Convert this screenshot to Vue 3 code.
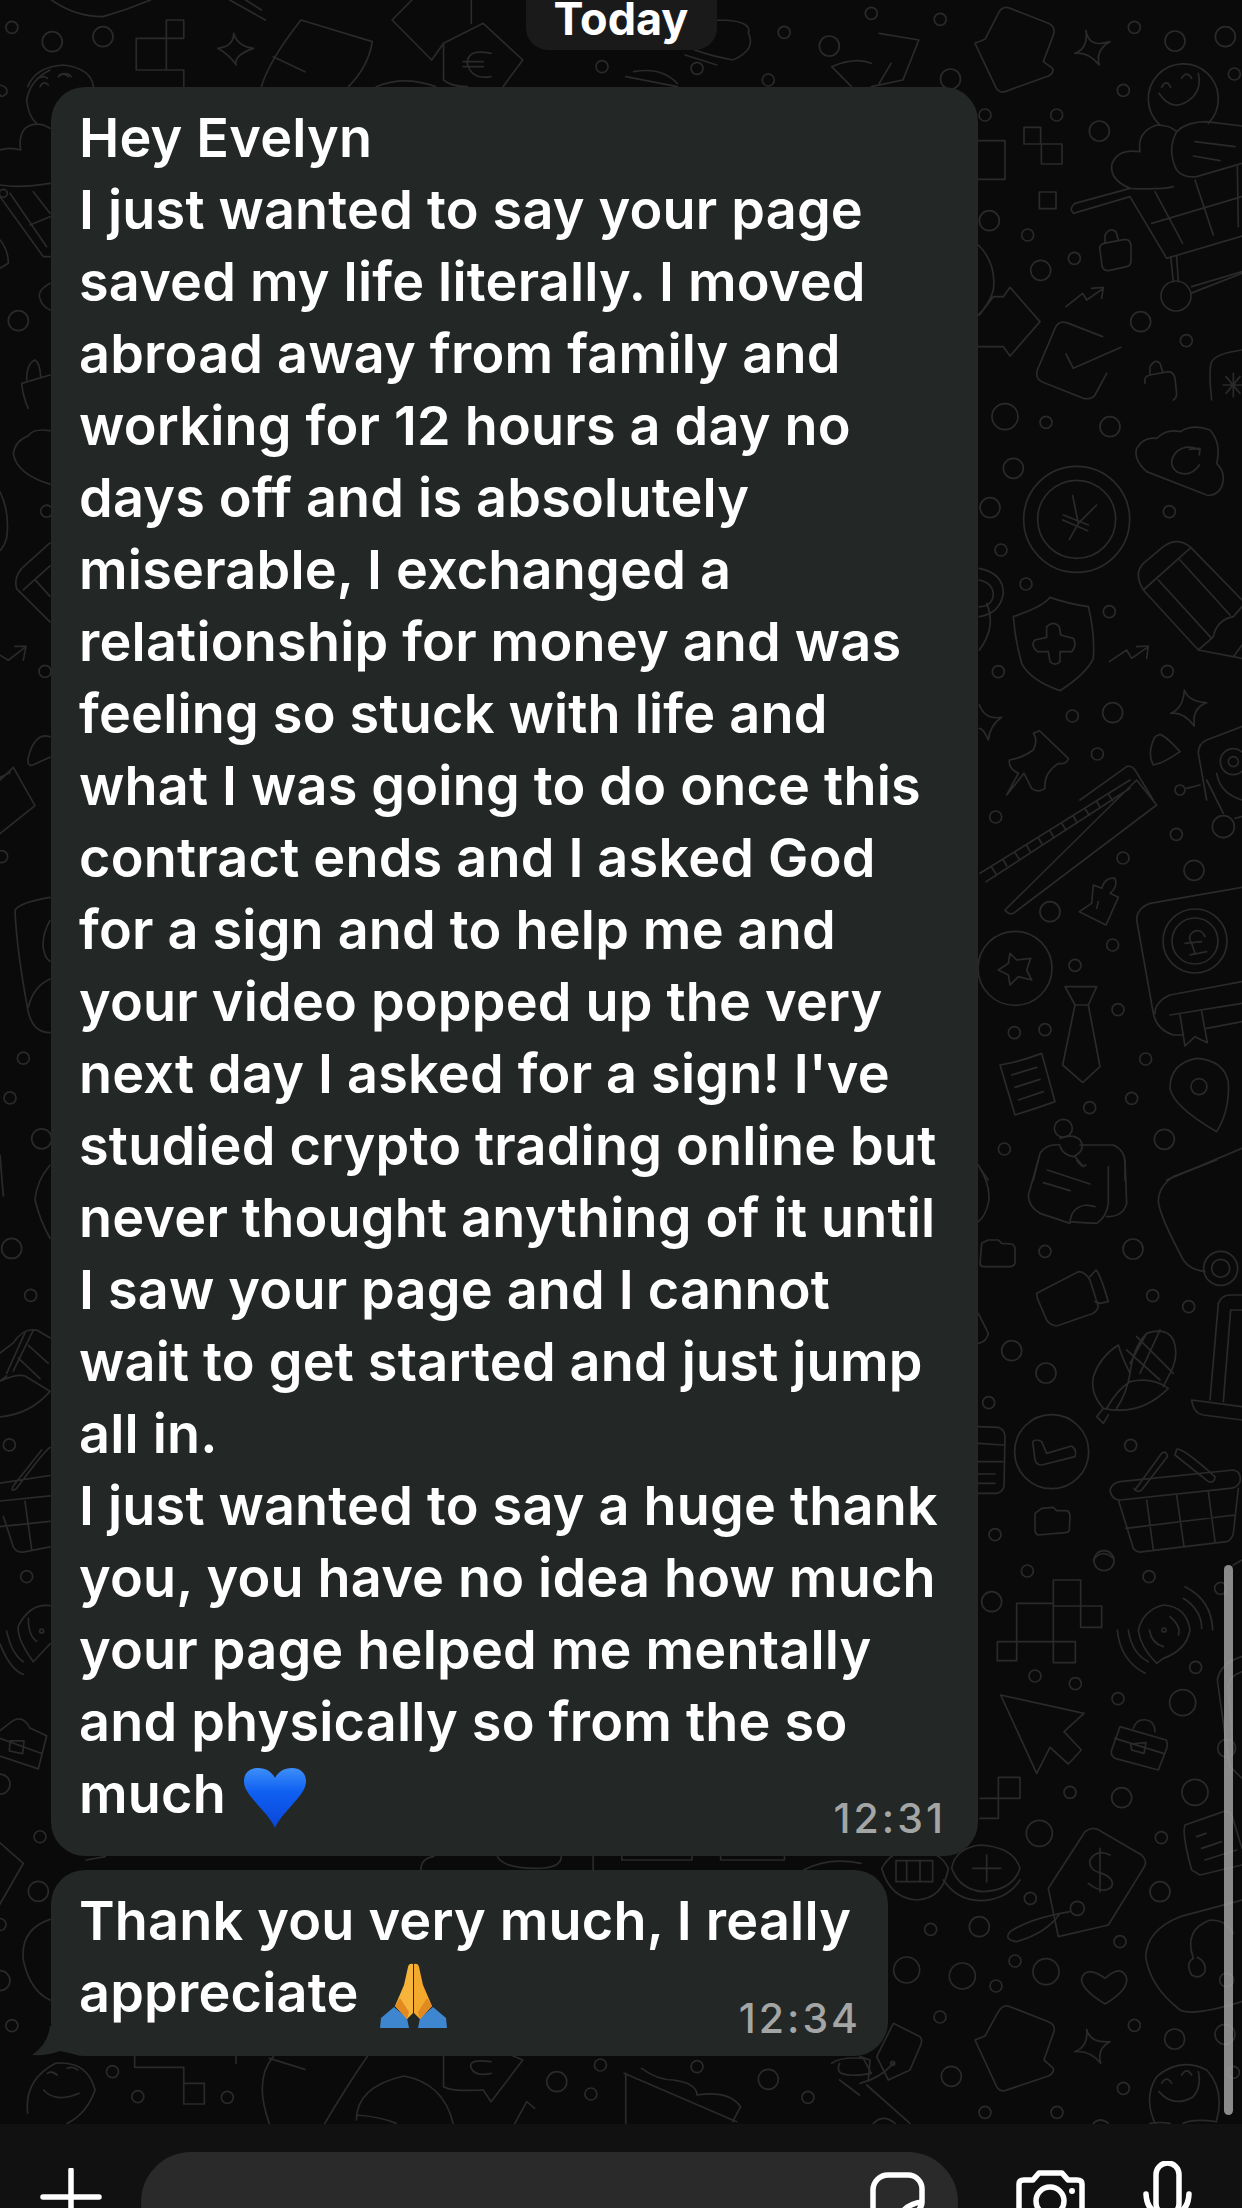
<script setup>
const messages = [
  {
    time: '12:31',
    emoji: 'heart',
    lines: [
      'Hey Evelyn',
      'I just wanted to say your page',
      'saved my life literally. I moved',
      'abroad away from family and',
      'working for 12 hours a day no',
      'days off and is absolutely',
      'miserable, I exchanged a',
      'relationship for money and was',
      'feeling so stuck with life and',
      'what I was going to do once this',
      'contract ends and I asked God',
      'for a sign and to help me and',
      'your video popped up the very',
      "next day I asked for a sign! I've",
      'studied crypto trading online but',
      'never thought anything of it until',
      'I saw your page and I cannot',
      'wait to get started and just jump',
      'all in.',
      'I just wanted to say a huge thank',
      'you, you have no idea how much',
      'your page helped me mentally',
      'and physically so from the so',
      'much'
    ]
  },
  {
    time: '12:34',
    emoji: 'pray',
    lines: ['Thank you very much, I really', 'appreciate']
  }
]

// wallpaper doodles, each group drawn in the scale it was measured at
const doodles = [
  {
    x: 960, y: 0, sx: 1 / 3, sy: 1 / 3,
    paths: [
      'M45 130 L75 118 L115 40 Q128 15 150 25 L265 70 Q288 80 280 105 L250 185 L278 205 Q282 220 265 228 L135 275 Q118 280 108 263 Z',
      'M378 92 Q385 145 450 125 Q405 150 418 195 Q385 155 345 160 Q385 145 378 92Z',
      'M192 382h50v50h-50z M244 432h62v60h-62z M238 576h50v50h-50z M55 422h80v116h-80',
      'M600 375 A105 105 0 1 1 745 370 M597 280 Q640 345 700 290 Q725 260 715 220 M605 262 Q620 235 632 262 M665 235 Q680 210 695 235',
      'M640 560 Q600 570 510 565 Q450 540 455 495 Q470 445 540 455 Q530 395 590 375 Q630 375 650 395',
      'M650 395 Q680 365 740 365 L846 378 M650 395 Q620 450 650 510 Q670 535 710 530 L846 490 M705 425 L825 440 M700 468 L780 482',
      'M340 640 Q325 625 345 610 L510 565 M340 640 L510 590 L620 775 L846 708 M575 670 L846 590 M585 575 L668 730 M705 540 L760 705 M832 500 L835 680',
      'M632 770 L640 845 M650 770 L655 845 M692 880 L846 820 M695 860 L846 815',
      'M420 750 Q416 735 432 730 L495 718 Q510 718 513 735 L513 780 Q515 795 500 800 L445 812 Q430 812 426 798 Z M435 725 V705 Q450 680 468 695 L475 720',
      'M318 920 L368 880 L380 900 L430 865 M395 865 L430 862 L425 895',
      'M58 945 L100 890 L130 890 L150 862 L240 965 L150 1068 L130 1040 L55 1040 M55 735 Q110 790 100 870 Q90 910 55 945',
      'M428 1010 L320 968 Q295 960 285 985 L232 1110 Q225 1135 245 1145 L370 1195 Q395 1200 405 1185 L440 1120 M318 1062 L340 1105 L483 1042',
      'M555 1150 Q550 1130 570 1125 L625 1115 Q640 1115 645 1135 L650 1180 Q650 1195 640 1200 M570 1125 V1100 Q585 1075 600 1090 L608 1115',
      'M846 1050 Q770 1060 755 1085 Q745 1110 755 1200 M820 1120 V1190 M790 1155 H846 M798 1130 L840 1180 M840 1130 L798 1180'
    ],
    rings: [[523, 82, 6], [645, 123, 10], [796, 110, 10], [823, 222, 6], [490, 271, 6], [75, 345, 6], [290, 345, 6], [418, 393, 10], [88, 662, 10], [203, 705, 6], [242, 811, 10], [343, 775, 6], [542, 965, 10], [679, 1022, 6], [648, 888, 15]]
  },
  {
    x: 950, y: 400, sx: 1 / 3, sy: 1 / 3,
    paths: [
      'M368 287 L385 370 L358 418 M440 315 L385 370 M340 345 L415 375 M338 360 L413 392',
      'M590 215 Q550 180 560 145 Q580 110 620 115 Q650 85 690 95 Q730 70 780 90 Q815 130 800 190 Q830 220 815 260 Q800 290 770 285 Z M750 150 Q710 130 680 155 Q650 190 680 215 Q720 235 748 195 M718 148 L750 145 L748 165',
      'M580 570 Q550 520 580 490 L640 440 Q680 410 720 440 L876 600 M580 570 L745 750 L876 775 M580 570 L720 445 M625 540 L785 715 M690 480 L840 645 M745 750 Q780 720 790 710 Q800 660 850 650 L876 620 M850 770 L876 735',
      'M190 650 Q280 620 300 592 Q350 610 415 620 Q435 700 430 775 Q410 820 330 872 Q240 840 215 790 Q195 720 190 650Z',
      'M290 680 Q310 660 328 680 L332 705 L370 715 Q382 735 365 755 L330 755 L330 785 Q315 800 300 785 L295 755 L262 755 Q240 735 255 720 L290 712Z',
      'M478 785 L530 750 L545 775 L595 740 M560 740 L595 738 L590 775',
      'M88 505 Q160 520 160 580 Q150 640 88 650 M88 540 Q130 550 130 585 Q125 620 88 620 M110 610 Q140 680 88 750',
      'M88 915 Q105 960 155 952 Q120 975 115 1020 Q100 985 88 985',
      'M703 870 Q715 905 770 908 Q725 925 733 978 Q700 935 662 940 Q700 925 703 870Z',
      'M268 992 L355 1075 Q350 1095 325 1090 Q280 1120 285 1165 Q265 1180 245 1165 L222 1120 L170 1185 L205 1120 Q175 1105 178 1080 Q215 1075 250 1050 Q265 1020 250 1000 Z',
      'M630 1003 Q650 1010 690 1055 Q640 1090 610 1095 Q590 1060 615 1010Z',
      'M876 980 L770 1020 Q745 1030 745 1060 L770 1200 M800 1120 Q810 1180 876 1200 M390 1200 L530 1100 Q545 1095 555 1110 L610 1200'
    ],
    rings: [[165, 50, 13], [288, 67, 6], [480, 80, 10], [190, 205, 10], [120, 323, 10], [153, 450, 6], [658, 335, 6], [228, 552, 6], [478, 635, 6], [145, 815, 6], [652, 814, 6], [367, 948, 6], [488, 938, 10], [442, 1062, 6], [380, 358, 53], [380, 358, 39], [850, 1085, 13], [850, 1085, 5]]
  },
  {
    x: 960, y: 780, sx: 1 / 3, sy: 1 / 3,
    paths: [
      'M60 280 L510 0 M530 0 L590 75 L160 400 Q145 405 135 390 Z M78 305 L510 25',
      'M95 262 L108 282 M130 240 L140 258 M165 218 L178 238 M200 196 L210 214 M235 174 L248 194 M270 152 L280 170 M305 130 L318 150 M340 108 L350 126 M375 86 L388 106 M410 64 L420 82 M445 42 L458 62',
      'M150 520 L170 540 L212 535 L200 570 L215 600 L175 590 L150 615 L145 585 L115 570 L145 550Z',
      'M400 315 L425 325 Q435 290 465 295 Q475 320 450 340 L475 352 L438 435 L358 395 L395 370Z M415 365 L410 385',
      'M315 620 L410 620 L385 675 L345 675Z M345 675 L308 855 L368 908 L420 860 L385 675',
      'M846 322 L570 370 Q530 385 530 420 L580 700 Q590 750 640 765 L665 765 M846 605 L630 645 Q585 665 585 700 M630 705 L846 670 M740 745 L846 725 M660 705 L675 798 L705 770 L742 788 L725 695',
      'M735 470 Q725 445 700 455 Q680 470 695 490 L705 520 L690 525 L740 515 M675 490 L725 485',
      'M120 855 Q180 845 245 820 L285 965 Q230 985 165 1005 Z M155 885 L230 862 M165 922 L240 898 M175 960 L250 935',
      'M770 1055 Q640 980 630 925 Q630 850 710 835 Q790 840 805 905 Q810 990 770 1055Z',
      'M220 1200 L240 1120 Q260 1090 300 1095 M360 1095 L460 1095 Q495 1110 495 1150 L495 1200 M300 1075 Q340 1060 360 1080 Q380 1110 340 1130 Q310 1125 300 1100 M345 1130 L370 1160',
      'M620 1200 L846 1105 M60 1165 L85 1200 M790 100 L740 0 M825 115 L846 110 M680 25 L720 15'
    ],
    rings: [[107, 111, 6], [489, 234, 6], [649, 163, 6], [702, 271, 10], [270, 395, 10], [458, 495, 6], [345, 556, 6], [474, 689, 6], [163, 758, 6], [255, 749, 6], [557, 837, 6], [515, 955, 6], [389, 983, 6], [613, 1078, 10], [133, 1107, 6], [790, 140, 11], [660, 30, 5], [165, 565, 37], [705, 483, 32], [705, 483, 23], [717, 920, 8], [310, 1045, 9]]
  },
  {
    x: 960, y: 1160, sx: 1 / 3, sy: 1 / 3,
    paths: [
      'M235 0 L205 105 Q205 140 240 160 L330 190 M262 30 L390 72 M250 68 L330 92 M330 185 Q335 140 380 135 L405 140 M330 185 Q390 190 410 190 Q440 170 445 130 L445 20 M495 0 L500 130 Q490 170 440 170 M350 0 Q365 25 378 15',
      'M65 250 L85 240 L115 240 L125 250 L155 252 Q165 255 165 270 L165 310 Q160 320 150 320 L70 320 Q60 320 60 310 Z',
      'M225 1060 L245 1045 L280 1042 L290 1052 L320 1052 Q330 1055 330 1070 L328 1110 Q325 1118 315 1118 L235 1125 Q225 1122 225 1110Z',
      'M770 0 L640 50 Q595 80 595 125 Q600 170 670 300 Q690 330 735 335',
      'M230 400 L355 335 Q375 335 390 360 L415 440 Q410 460 385 465 L290 498 Q270 495 260 480 L232 415 Z M390 350 L408 330 Q420 340 445 425 L420 430 L405 425',
      'M410 770 L430 745 Q390 700 400 650 Q420 590 475 555 Q485 590 510 640 Q500 700 470 745 M430 745 Q540 770 625 685 Q575 650 510 665 Q470 690 440 745 M510 640 Q520 560 560 520 Q620 500 640 540 Q660 590 625 650 L610 680 M500 570 L600 660 M530 530 L640 640 M560 520 L510 610 M600 510 L540 640 M410 770 L430 790 L445 765',
      'M750 720 L775 430 Q785 405 810 405 L846 405 M790 725 L812 450 L846 450 M695 720 L846 740 M695 720 Q700 760 730 765 L846 780',
      'M218 845 Q230 835 245 845 L260 880 L335 858 Q352 870 345 890 L245 915 Q230 915 225 900Z',
      'M450 990 Q455 970 480 965 L820 930 Q845 935 840 965 Q830 985 810 985 L480 1020 Q455 1020 450 990Z M475 1020 L520 1165 Q530 1180 550 1175 L800 1145 Q815 1140 820 1120 L835 985 M560 1020 L580 1170 M650 1005 L672 1160 M745 995 L765 1145 M498 1105 L825 1065',
      'M525 990 L605 880 Q620 870 622 890 L545 990 Q530 1000 522 985 M650 868 Q665 860 765 950 Q765 970 745 965 L645 885 Z',
      'M55 800 L115 802 Q135 810 135 830 L132 980 Q125 1000 105 1000 L55 1000 M55 850 L130 855 M55 905 L128 905 M55 942 L105 942 M55 970 L105 970',
      'M55 15 Q95 80 85 130 Q75 170 55 185 M55 460 L85 520 Q80 545 55 550 M400 1200 Q425 1165 460 1195'
    ],
    rings: [[255, 274, 6], [519, 267, 10], [782, 325, 17], [782, 325, 9], [578, 407, 6], [686, 440, 6], [155, 572, 10], [258, 639, 10], [86, 728, 6], [512, 856, 6], [105, 1124, 6], [275, 875, 37]]
  },
  {
    x: 880, y: 1540, sx: 1 / 3, sy: 1 / 3,
    paths: [
      'M520 120 H602 V198 H665 V262 H602 V198 H520 Z M410 190 H520 V305 H410 Z M352 305 H410 V362 H352 Z M520 305 H586 V368 H520 Z',
      'M830 370 Q780 320 775 270 Q790 210 850 195 Q920 200 930 270 Q920 330 850 355 Z M870 230 Q905 260 895 285 M808 270 Q815 310 850 320 M910 175 Q965 210 965 265 M915 140 Q995 180 998 270 M745 270 Q755 340 805 365 M712 270 Q720 360 795 400',
      'M362 465 L612 520 L552 575 L604 630 L565 672 L510 622 L470 700 Z',
      'M720 560 L858 600 Q865 610 860 625 L835 690 L705 655 Q690 645 695 630 Z M760 565 Q770 535 800 540 Q825 545 825 575 M705 595 L850 640 M752 612 L798 608 L792 640 L755 630 Z',
      'M355 712 H420 V775 H355 V712 M300 775 H355 V835 H300',
      'M505 1045 L615 875 Q640 855 665 875 L785 945 Q805 965 790 985 L685 1155 L535 1190 Z M690 945 Q650 925 630 960 Q625 990 665 1000 Q705 1015 695 1040 Q670 1065 625 1030 M660 925 V1055',
      'M915 855 L1030 815 Q1055 810 1060 840 L1086 925 M915 855 Q905 880 935 990 L960 1005 L1086 975 M950 890 L978 880 M965 925 L1025 905 M975 960 L1070 930',
      'M1086 350 Q1020 370 1012 420 L1040 620 L1050 680 L1086 715 M1086 395 Q1045 410 1045 440 L1060 640 M1086 60 L1060 75',
      'M5 985 Q40 925 100 930 Q180 930 205 985 Q190 1075 110 1080 Q30 1075 5 985Z M48 962 H158 V1025 H48Z M80 962 V1025 M120 962 V1025',
      'M215 985 Q225 925 300 915 Q400 920 420 985 Q400 1050 310 1055 Q240 1050 215 985Z M190 1020 Q230 1080 300 1082 Q380 1080 420 1020 M320 945 V1025 M278 985 H362'
    ],
    rings: [[442, 93, 6], [672, 62, 10], [807, 110, 6], [335, 185, 10], [1022, 145, 6], [465, 408, 6], [586, 431, 6], [947, 382, 6], [714, 476, 6], [908, 488, 13], [570, 757, 6], [725, 773, 10], [945, 757, 13], [478, 880, 13], [844, 893, 6], [840, 1055, 10], [451, 1075, 6], [152, 1168, 6], [298, 1160, 10], [852, 270, 2], [592, 1105, 7], [1040, 625, 9]]
  },
  {
    x: 860, y: 1900, sx: 1 / 3, sy: 1 / 3,
    paths: [
      'M630 35 Q510 55 450 95 Q430 120 470 125 Q560 100 600 40',
      'M735 312 Q660 265 665 235 Q680 195 735 235 Q785 190 800 235 Q805 270 735 312Z',
      'M1146 0 L960 50 Q860 90 857 170 Q870 260 960 330 Q1000 350 1146 305',
      'M1000 175 Q970 90 1050 60 Q1100 60 1120 100 M1000 175 Q975 190 995 225 Q1020 240 1035 215 Q1040 185 1012 172',
      'M345 420 L375 408 L415 335 Q430 312 450 320 L565 365 Q590 375 580 400 L552 480 L580 505 Q582 520 565 528 L435 572 Q420 575 410 560 Z',
      'M680 388 Q690 430 750 425 Q710 445 722 490 Q690 450 645 455 Q685 440 680 388Z',
      'M885 670 Q850 590 890 530 Q960 470 1040 510 Q1095 570 1070 660 M897 575 Q940 625 1000 590 Q1025 560 1015 515 M905 550 Q920 525 935 550 M965 525 Q980 500 995 525',
      'M100 370 L180 410 Q190 420 180 440 L150 510 L85 540 L50 470 Z M0 550 Q60 535 100 490',
      'M0 470 L30 480 L25 540 M20 555 L150 670 M40 670 Q70 640 105 670 M700 670 Q720 650 745 670 M870 670 Q900 665 930 670 M970 670 Q1000 655 1070 665'
    ],
    rings: [[780, 125, 6], [140, 210, 13], [307, 228, 13], [465, 183, 6], [408, 258, 6], [558, 215, 13], [240, 351, 6], [823, 376, 6], [944, 417, 10], [1095, 403, 10], [274, 529, 10], [790, 565, 6], [375, 637, 6], [591, 637, 6], [1120, 517, 6], [1100, 240, 7], [98, 490, 2]]
  },
  {
    x: 0, y: 0, sx: 1 / 1.2625, sy: 1 / 3,
    paths: [
      'M65 0 Q95 50 130 50 Q160 30 190 0 M290 0 L335 60 M310 0 L330 30',
      'M172 115 H232 V60 H210 V210 H172 Z M172 210 H232 V260',
      'M295 100 Q300 140 320 145 Q295 165 298 195 Q290 165 275 145 Q295 140 295 100',
      'M330 260 Q340 180 380 60 L470 125 Q465 200 440 260 M345 170 L385 215',
      'M35 260 Q45 200 80 195 Q115 205 118 260 M48 235 Q55 225 60 235 M75 225 Q85 215 90 230',
      'M560 130 L610 70 L660 180 L635 260 M560 130 L545 180 L495 60 L520 0 M595 0 V70 M560 130 L560 240 Q570 260 590 260 M620 160 Q590 145 590 190 Q595 240 620 230 M585 185 H610 M585 200 H610',
      'M475 260 Q510 225 550 260',
      'M905 60 Q950 60 945 100 Q955 150 925 180 Q880 160 860 130 Q885 85 905 60 M865 165 L905 195 M790 230 L855 260 M800 215 Q835 200 855 250',
      'M1110 100 L1160 120 L1140 240 L1100 260 M1050 200 Q1080 170 1100 190 M1050 200 L1075 260 M1125 190 L1110 250'
    ],
    rings: [[15, 82, 6], [66, 125, 10], [130, 110, 10], [1100, 40, 6], [1187, 58, 6], [1047, 138, 10], [990, 97, 6], [760, 200, 6], [880, 205, 6], [970, 240, 6], [1200, 237, 10]]
  },
  {
    x: 0, y: 1980, sx: 1 / 1.2625, sy: 1 / 3,
    paths: [
      'M35 400 Q30 300 70 250 Q110 240 120 330 Q110 400 85 430 M55 330 Q70 370 100 340 M60 280 Q65 270 72 285 M85 265 Q92 258 98 270',
      'M170 225 V262 H232 V310 H258 V372 H232 V310',
      'M345 230 Q320 300 340 430 M340 235 L385 268 M298 225 V250',
      'M465 225 Q440 310 410 430 M450 420 Q450 320 510 288 Q560 310 572 430 M450 405 Q480 410 500 430',
      'M560 225 V320 Q570 335 610 330 L620 365 L660 240 L645 225 M620 245 Q590 235 595 265 Q600 290 620 280',
      'M650 430 L665 365 L675 385',
      'M788 280 L930 425 M790 280 L790 430 M810 265 Q830 300 850 300 Q880 310 880 345 Q920 330 935 380 L925 425',
      'M1050 250 Q1060 230 1090 235 L1100 280 Q1050 300 1060 250 M1060 300 L1085 345'
    ],
    rings: [[15, 137, 6], [142, 275, 6], [174, 350, 6], [287, 352, 6], [703, 305, 10], [746, 342, 6], [758, 255, 6], [880, 260, 6], [970, 298, 10], [1020, 352, 6]]
  },
  {
    x: 0, y: 1740, sx: 1 / 1.568, sy: 1 / 3,
    paths: ['M135 360 L165 350 M660 390 Q660 355 680 350 M780 350 Q790 385 840 385 Q880 385 880 350 M930 350 V390 M975 350 V360 H1085 V350 M1130 350 V360 H1230 V350 M1260 390 Q1300 350 1350 370'],
    rings: []
  },
  {
    x: 0, y: 70, sx: 1 / 3, sy: 1 / 3,
    paths: [
      'M150 0 Q90 30 80 90 Q85 140 110 160 M120 50 Q130 30 145 45 M175 20 Q190 5 205 20',
      'M150 175 Q110 150 75 175 Q55 200 62 240 Q30 230 0 240 M0 345 Q60 355 150 340',
      'M0 380 L130 560 L150 560 M30 370 L140 530 M90 465 L150 440 M100 365 L150 430',
      'M0 510 Q25 540 25 580 L0 595 M150 640 Q115 660 118 680 Q125 710 150 720',
      'M65 940 L150 915 M65 940 Q70 985 85 1015 M80 930 Q80 880 105 870 Q120 880 122 920 M0 45 Q25 50 20 70 Q5 85 0 75'
    ],
    rings: [[10, 370, 4], [55, 752, 10]]
  },
  {
    x: 0, y: 400, sx: 1 / 3, sy: 1 / 1.96,
    paths: [
      'M150 60 Q100 55 85 70 Q45 80 40 105 Q50 145 150 165 M0 180 Q30 220 20 270 Q10 290 0 295',
      'M150 280 L65 330 Q40 350 50 370 L150 435 M70 372 L150 325 M105 352 L150 385',
      'M0 500 L25 510 L75 485 M45 483 L78 483 L70 510 M150 660 Q105 650 85 700 Q80 720 100 715 L150 700',
      'M0 745 L40 720 L105 795 L0 850 M0 740 L30 730',
      'M150 975 Q60 985 45 1000 Q50 1080 85 1200 Q100 1240 150 1240 M150 1020 Q125 1050 130 1075 Q135 1095 150 1100 M150 1135 Q100 1150 85 1190',
      'M0 1480 L10 1560 M150 1500 Q110 1530 105 1568'
    ],
    rings: [[140, 218, 6], [135, 532, 6], [5, 895, 6], [70, 1290, 6], [30, 1368, 6], [125, 1448, 10]]
  },
  {
    x: 0, y: 1200, sx: 1 / 3, sy: 1 / 1.96,
    paths: [
      'M105 0 Q120 40 150 75',
      'M0 300 L40 280 Q70 250 110 255 L150 270 M0 355 Q50 340 75 345 L150 375 Q90 420 0 425 M0 355 L20 345 M20 340 L75 260 M55 310 L120 350 M85 285 L145 320 M100 255 L40 335',
      'M150 485 Q135 490 50 565 Q30 575 40 560 L125 490 M0 555 L150 540 M0 590 L150 580 M0 640 L150 630 M75 590 L95 685 M10 620 L40 680 Q50 692 70 690 L150 680',
      'M150 795 Q90 790 55 835 Q50 860 100 905 L150 870 M85 820 Q85 855 110 865 M20 845 Q35 890 70 905 M0 870 Q30 920 70 930',
      'M0 1040 L40 1020 Q70 1010 90 1035 L140 1050 L115 1115 L0 1090 M0 1055 L125 1085 M30 1060 L72 1060 L68 1085 L28 1080Z',
      'M0 1260 L70 1300 L0 1380 M150 1410 Q60 1430 70 1490 Q90 1550 150 1568'
    ],
    rings: [[35, 95, 10], [92, 187, 6], [28, 480, 6], [80, 738, 6], [120, 1248, 6], [115, 1355, 10], [0, 1145, 10], [0, 1420, 6], [0, 1530, 10], [125, 845, 2]]
  }
]

const rings = doodles.flatMap((d) =>
  d.rings.map(([cx, cy, r]) => ({ cx: d.x + cx * d.sx, cy: d.y + cy * d.sy, r }))
)
</script>

<template>
  <div class="screen">
    <svg class="wallpaper" width="1242" height="2124" viewBox="0 0 1242 2124" fill="none">
      <g v-for="(d, i) in doodles" :key="i" :transform="`translate(${d.x} ${d.y}) scale(${d.sx} ${d.sy})`">
        <path v-for="(p, j) in d.paths" :key="j" :d="p" />
      </g>
      <circle v-for="(c, i) in rings" :key="'r' + i" :cx="c.cx" :cy="c.cy" :r="c.r" />
    </svg>

    <main class="chat">
      <div class="day">Today</div>

      <div v-for="(m, i) in messages" :key="i" class="bubble" :class="m.emoji">
        <div v-for="(line, n) in m.lines" :key="n" class="line">
          {{ line }}
          <template v-if="n === m.lines.length - 1">
            <svg v-if="m.emoji === 'heart'" class="emoji" width="62" height="60" viewBox="0 0 62 60">
              <defs>
                <linearGradient id="heartFill" x1="0" y1="0" x2="0" y2="1">
                  <stop offset="0" stop-color="#3d8ff9" />
                  <stop offset="0.4" stop-color="#0f60f2" />
                  <stop offset="1" stop-color="#0a46d8" />
                </linearGradient>
              </defs>
              <path d="M31 60 C27 50 17 41 8 30 C2 23 0 18 0 13 C0 5 6 0 14 0 C22 0 28 4 31 10 C34 4 40 0 48 0 C56 0 62 5 62 13 C62 18 60 23 54 30 C45 41 35 50 31 60Z" fill="url(#heartFill)" />
            </svg>
            <svg v-else class="emoji pray-icon" width="67" height="65" viewBox="0 0 67 65">
              <path d="M0 65 L1 55 L14 44 L27 55 L29 65Z" fill="#3e86d0" />
              <path d="M67 65 L66 55 L53 44 L40 55 L38 65Z" fill="#3e86d0" />
              <path d="M33 1 Q29 0 28 4 L24 22 L15 43 L27 56 L33 50Z" fill="#f6b53a" />
              <path d="M34 1 Q38 0 39 4 L43 22 L52 43 L40 56 L34 50Z" fill="#f2a92c" />
              <path d="M15 43 L27 56 L29 49 L20 35Z" fill="#e28a22" />
              <path d="M52 43 L40 56 L38 49 L47 35Z" fill="#e28a22" />
            </svg>
          </template>
        </div>
        <span class="time">{{ m.time }}</span>
        <svg v-if="i === messages.length - 1" class="tail" width="50" height="30" viewBox="0 0 50 30">
          <path d="M18 0 Q16 18 0 29 Q16 30 28 25 L50 30 L50 0Z" />
        </svg>
      </div>
    </main>

    <div class="scrollbar"></div>

    <footer class="composer">
      <svg class="plus" width="62" height="40" viewBox="0 0 62 40" fill="none">
        <path d="M31 2 V40 M3 29 H59" />
      </svg>
      <div class="input">
        <svg class="sticker" width="55" height="40" viewBox="0 0 55 40" fill="none">
          <path d="M3 40 V18 A15 15 0 0 1 18 3 H38 A14 14 0 0 1 52 17 V30 Q40 31 32 40 M52 30 Q52 36 46 40" />
        </svg>
      </div>
      <svg class="camera" width="69" height="40" viewBox="0 0 69 40" fill="none">
        <path d="M3 40 V14 Q3 10 8 10 H17 L23 3 H46 L52 10 H61 Q66 10 66 14 V40" />
        <circle cx="34" cy="31" r="14" />
        <circle class="dot" cx="56" cy="21" r="3" />
      </svg>
      <svg class="mic" width="49" height="48" viewBox="0 0 49 48" fill="none">
        <rect x="13" y="2" width="23" height="52" rx="11.5" />
        <path d="M3 33 Q4 54 24.5 54 Q45 54 46 33" />
      </svg>
    </footer>
  </div>
</template>

<style scoped>
.screen {
  position: relative;
  width: 1242px;
  height: 2208px;
  display: flex;
  flex-direction: column;
  overflow: hidden;
  background: #0a0a0a;
  color: #fff;
  font-family: Inter, "Liberation Sans", sans-serif;
}

.wallpaper {
  position: absolute;
  top: 0;
  left: 0;
}

.wallpaper path,
.wallpaper circle {
  stroke: #2a2a2a;
  stroke-width: 1.7;
  vector-effect: non-scaling-stroke;
  stroke-linecap: round;
  stroke-linejoin: round;
}

.chat {
  position: relative;
  flex: 1;
  display: flex;
  flex-direction: column;
  align-items: flex-start;
  gap: 14px;
  padding-left: 51px;
}

.day {
  align-self: center;
  margin: 0 0 23px -51px;
  width: 191px;
  height: 50px;
  border-radius: 0 0 22px 22px;
  background: #1a1a1a;
  text-align: center;
  font-size: 45px;
  font-weight: 700;
  line-height: 38px;
}

.bubble {
  position: relative;
  box-sizing: border-box;
  padding: 15px 28px 26px;
  border-radius: 34px;
  background: #232726;
  font-size: 54px;
  font-weight: 560;
  line-height: 72px;
  letter-spacing: 0.2px;
  white-space: nowrap;
}

.bubble.heart {
  width: 927px;
}

.bubble.pray {
  width: 837px;
}

.emoji {
  margin-left: 4px;
  vertical-align: middle;
}

.pray-icon {
  margin-left: 8px;
  position: relative;
  top: -2px;
}

.time {
  position: absolute;
  right: 27px;
  bottom: 23px;
  height: 30px;
  font-size: 41px;
  font-weight: 500;
  line-height: 30px;
  letter-spacing: 3px;
  color: #a4a6a5;
}

.bubble.heart .time {
  right: 32px;
}

.tail {
  position: absolute;
  left: -19px;
  bottom: 0;
}

.tail path {
  fill: #232726;
}

.scrollbar {
  position: absolute;
  top: 1565px;
  left: 1224px;
  width: 9px;
  height: 550px;
  border-radius: 5px;
  background: rgba(170, 170, 170, 0.8);
}

.composer {
  position: relative;
  height: 84px;
  flex: none;
  display: flex;
  align-items: flex-start;
  overflow: hidden;
  padding-left: 40px;
  background: #111;
}

.composer svg path,
.composer svg rect,
.composer svg circle {
  stroke: #fff;
  stroke-width: 5.5;
  stroke-linecap: round;
  stroke-linejoin: round;
}

.composer svg .dot {
  fill: #fff;
  stroke: none;
}

.plus {
  margin-top: 44px;
}

.input {
  width: 817px;
  height: 100px;
  margin: 28px 0 0 39px;
  padding: 20px 33px 0 0;
  box-sizing: border-box;
  display: flex;
  justify-content: flex-end;
  border-radius: 50px;
  background: #2a2a2a;
}

.sticker {
  flex: none;
}

.camera {
  margin: 46px 0 0 58px;
}

.mic {
  margin: 37px 0 0 58px;
}
</style>

<style>
html,
body {
  margin: 0;
  background: #0a0a0a;
}
</style>
